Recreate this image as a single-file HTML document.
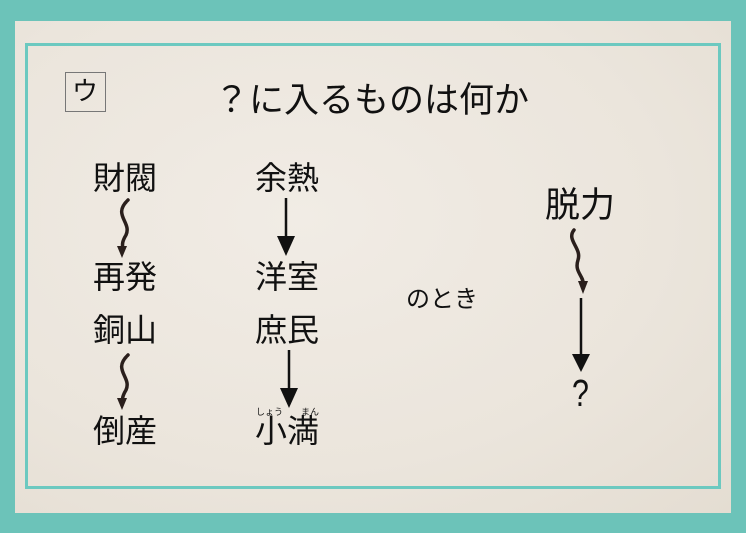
<!DOCTYPE html>
<html><head><meta charset="utf-8"><style>
html,body{margin:0;padding:0}
body{width:746px;height:533px;background:#6cc3b9;position:relative;overflow:hidden;font-family:"Liberation Sans","Noto Sans CJK JP",sans-serif;color:#111}
#paper{position:absolute;left:15px;top:21px;width:716px;height:492px;background:radial-gradient(ellipse at 40% 40%,#f1ece5 0%,#ebe5dc 60%,#e4ddd2 100%)}
#frame{position:absolute;left:25px;top:43px;width:690px;height:440px;border:3px solid #6cc9c0}
.t{position:absolute;line-height:1;white-space:nowrap}
.w{font-size:32px}
#box{position:absolute;left:65px;top:72px;width:39px;height:38px;border:1.5px solid #777}
</style></head><body>
<div id="paper"></div>
<div id="frame"></div>
<div id="box"></div>
<div class="t" style="left:72px;top:78px;font-size:26px">ウ</div>
<div class="t" style="left:214px;top:83px;font-size:35px">？に入るものは何か</div>
<div class="t w" style="left:93px;top:162px">財閥</div>
<div class="t w" style="left:93px;top:261px">再発</div>
<div class="t w" style="left:93px;top:314px">銅山</div>
<div class="t w" style="left:93px;top:415px">倒産</div>
<div class="t w" style="left:255px;top:162px">余熱</div>
<div class="t w" style="left:255px;top:261px">洋室</div>
<div class="t w" style="left:255px;top:314px">庶民</div>
<div class="t w" style="left:255px;top:415px">小満</div>
<div class="t" style="left:256px;top:408px;font-size:9px">しょう</div>
<div class="t" style="left:301px;top:408px;font-size:9px">まん</div>
<div class="t" style="left:545px;top:188px;font-size:35px">脱力</div>
<div class="t" style="left:406px;top:288px;font-size:24px">のとき</div>
<div class="t" style="left:572px;top:375px;font-size:38px;transform:scaleX(0.8);transform-origin:left">?</div>
<svg width="746" height="533" style="position:absolute;left:0;top:0">
<g fill="none" stroke="#2a1f1c" stroke-width="3.5" stroke-linecap="round">
<path d="M128 200 C112 215,132 222,126 235 C120 245,124 246,122 252"/>
<path d="M128 355 C112 370,132 377,126 390 C120 400,124 401,122 405"/>
<path d="M574 230 C566 240,582 248,578 260 C574 272,584 276,583 284"/>
</g>
<g fill="#2a1f1c">
<path d="M117 246 L127 246 L122 258 Z"/>
<path d="M117 398 L127 398 L122 410 Z"/>
<path d="M578 281 L588 281 L583 294 Z"/>
</g>
<g stroke="#111" stroke-width="2.5"><line x1="286" y1="198" x2="286" y2="240"/><line x1="289" y1="350" x2="289" y2="392"/><line x1="581" y1="298" x2="581" y2="358"/></g>
<g fill="#111">
<path d="M277 236 L295 236 L286 256 Z"/>
<path d="M280 388 L298 388 L289 408 Z"/>
<path d="M572 354 L590 354 L581 372 Z"/>
</g>
</svg>
</body></html>
